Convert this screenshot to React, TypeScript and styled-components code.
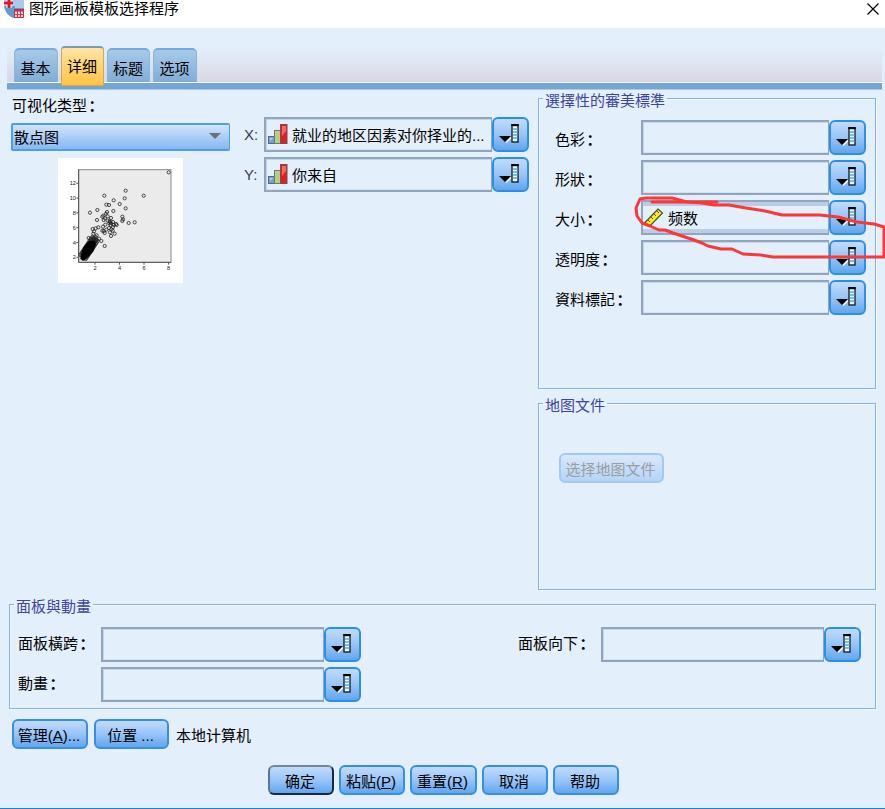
import React from "react";
import styled, { createGlobalStyle, css } from "styled-components";

const GlobalStyle = createGlobalStyle`
  * { box-sizing: border-box; }
  body {
    margin: 0;
    overflow: hidden;
    background: #e3effb;
    color: #000;
    font: 15px/20px "Liberation Sans", "Noto Sans CJK SC", sans-serif;
  }
`;

const Window = styled.div`
  position: relative;
  width: 885px;
  height: 809px;
  display: flex;
  flex-direction: column;
  background: #e3effb;
  border-bottom: 1px solid #1583d8;
  white-space: nowrap;
`;

const TitleBar = styled.header`
  height: 28px;
  flex: none;
  display: flex;
  align-items: flex-start;
  padding: 0 5px 0 4px;
  background: #fff;
`;

const Title = styled.h1`
  flex: 1;
  margin: 0 0 0 4px;
  font: inherit;
  line-height: 17px;
`;

const CloseIcon = styled.svg`
  margin-top: 2px;
`;

const TabStrip = styled.nav`
  height: 54px;
  flex: none;
  margin: 0 3px 0 7px;
  padding-left: 7px;
  display: flex;
  align-items: flex-end;
  background: linear-gradient(#e3effb 35%, #d9d7e4);
`;

const TabRule = styled.div`
  height: 8px;
  flex: none;
  margin: 0 3px 0 7px;
  background: #74a5d3;
  border-top: 1px solid #f5f8fc;
  border-bottom: 1px solid #a9cbea;
`;

const Tab = styled.button<{ $active?: boolean; $width: number }>`
  width: ${(p) => p.$width}px;
  height: 34px;
  margin-right: 3px;
  padding: 6px 1px 0 0;
  border: 1px solid #86b6e0;
  border-top: 2px solid #78a9d8;
  border-bottom: 0;
  border-radius: 5px 5px 0 0;
  background: linear-gradient(#a5cbea, #82acd6);
  color: #000;
  font: inherit;
  line-height: 24px;
  ${(p) =>
    p.$active &&
    css`
      height: 40px;
      margin-bottom: -4px;
      padding: 1px 1px 0 0;
      z-index: 1;
      border: 1px solid #dca83e;
      border-top: 2px solid #7b99b8;
      border-radius: 4px 4px 0 0;
      background: linear-gradient(#ffe4a6, #ffc444);
    `}
`;

const Main = styled.main`
  height: 506px;
  flex: none;
  display: grid;
  grid-template-columns: 232px 306px 338px;
`;

const TypePanel = styled.section`
  padding: 6px 0 0 11px;
`;

const TypeLabel = styled.div`
  height: 27px;
  padding-left: 1px;
`;

const Colon = styled.span`
  margin-left: 1.5px;
  font-weight: 700;
`;

const Select = styled.div`
  width: 219px;
  height: 28px;
  display: flex;
  align-items: center;
  justify-content: space-between;
  padding: 2px 8px 0 1px;
  border: 2px solid #4f9fe8;
  border-right-width: 1px;
  border-radius: 2px;
  background: linear-gradient(#d0e4fb, #86b8f2);
`;

const SelectArrow = styled.svg`
  margin-bottom: 4px;
`;

const Preview = styled.svg`
  display: block;
  margin: 7px 0 0 47px;
  background: #fff;
`;

const AxisPanel = styled.section`
  padding: 27px 0 0 12px;
  display: flex;
  flex-direction: column;
  gap: 5px;
`;

const SideColumn = styled.aside`
  display: flex;
  flex-direction: column;
  gap: 6px;
`;

const Group = styled.fieldset<{ $height: number }>`
  height: ${(p) => p.$height}px;
  min-width: 0;
  margin: 0;
  padding: 0 0 0 4px;
  border: 1px solid #84b3df;
  box-shadow: 1px 1px #f1f8fe, inset 1px 1px #f1f8fe;
`;

const Legend = styled.legend`
  padding: 4px 2px 0;
  height: 17px;
  line-height: 13px;
  color: #3f45a1;
`;

const Rows = styled.div`
  display: flex;
  flex-direction: column;
  gap: 5px;
  padding: 13px 0 0 12px;
`;

const PanelRows = styled.div`
  display: grid;
  grid-template-columns: 500px 1fr;
  row-gap: 5px;
  padding: 14px 0 0 4px;
`;

const Row = styled.div`
  display: flex;
  height: 35px;
`;

const Label = styled.label<{ $width: number; $axis?: boolean; $top?: number }>`
  width: ${(p) => p.$width}px;
  flex: none;
  padding-top: ${(p) => p.$top ?? 9}px;
  color: ${(p) => (p.$axis ? "#3c3c48" : "#000")};
`;

const Field = styled.div<{ $width: number; $shaded?: boolean }>`
  width: ${(p) => p.$width}px;
  height: 35px;
  display: flex;
  align-items: center;
  gap: 4px;
  padding: 0 0 0 2px;
  border: 2px solid #92a5bc;
  border-right-width: 1px;
  box-shadow: inset 1px 1px #c1d7ed, inset 0 -1px #cfe1f3;
  ${(p) => p.$shaded && "padding-left: 1px; box-shadow: inset 0 4px #b9cee5, inset 0 -4px #b9cee5;"}
`;

const FieldText = styled.span`
  padding-top: 3px;
`;

const buttonFace = css`
  border: 2px solid #2c8fe7;
  border-radius: 6px;
  background: linear-gradient(#c0dbfc, #98c5f8 50%, #62a6ee);
  color: #000;
  font: inherit;
`;

const PickerButton = styled.button`
  ${buttonFace}
  width: 37px;
  height: 35px;
  padding: 5px 0 0 5px;
  display: flex;
`;

const Button = styled.button<{ $width: number; $primary?: boolean }>`
  ${buttonFace}
  border-color: #388fe0;
  width: ${(p) => p.$width}px;
  height: 30px;
  padding: 3px 2px 0 0;
  line-height: 24px;
  ${(p) => p.$primary && "border-color: #778798 #172b40 #172b40 #5d7690;"}
  &:disabled {
    border-color: #a0caf3;
    background: linear-gradient(#d9e8fc, #b4d4f6);
    color: #9a9da1;
  }
`;

const MapArea = styled.div`
  padding: 41px 0 0 16px;
`;

const BottomArea = styled.section`
  margin: 0 9px 0 9px;
`;

const LocationBar = styled.div`
  display: flex;
  gap: 6px;
  margin: 10px 0 0 12px;
`;

const LocationText = styled.span`
  padding: 7px 0 0 1px;
`;

const Footer = styled.footer`
  display: flex;
  gap: 5px;
  margin: 16px 0 0 268px;
`;

const Markup = styled.svg`
  position: absolute;
  left: 0;
  top: 0;
  pointer-events: none;
`;

function AppIcon() {
  return (
    <svg width="21" height="19" viewBox="0 0 21 19">
      <path d="M0 0H20V10C18 16 14 19 10 18C5 17 1 12 0 6Z" fill="#5d9cce" />
      <path d="M8 0H20V8H11V6H8Z" fill="#a8cce8" />
      <path d="M0 3H9M5 0V8" stroke="#fff" strokeWidth="5" />
      <path d="M0 3H9M5 0V8" stroke="#d9182d" strokeWidth="3" />
      <path d="M10.500 9.500H19.500V17.500H10.500Z" fill="#f4d2d7" stroke="#c62b42" />
      <path d="M10 10.500H20" stroke="#c62b42" strokeWidth="2" />
      <path d="M10 14.500H20M13.500 11V18M16.500 11V18" stroke="#d7344d" />
    </svg>
  );
}

function PickerIcon() {
  return (
    <svg width="22" height="21" viewBox="0 0 22 21">
      <path d="M0 12H12L6 18Z" fill="#000" />
      <path d="M7 18.500L12 13.500" stroke="#fff" strokeWidth="1.200" />
      <rect x="13" y="1" width="6" height="17" fill="#eaf7ff" stroke="#222" strokeWidth="1.400" />
      <path d="M12.300 1H19.700" stroke="#000" strokeWidth="2.400" />
      <path d="M14 5H18.500M14 8H18.500M14 11H18.500M14 14H18.500" stroke="#4eb0dc" strokeWidth="1.300" />
    </svg>
  );
}

function OrdinalIcon() {
  return (
    <svg width="20" height="21" viewBox="0 0 20 21">
      <rect x=".5" y="12.500" width="6" height="7" fill="#6ea2dc" stroke="#63666d" />
      <rect x="6.500" y="6.500" width="6" height="13" fill="#afd08c" stroke="#74776f" />
      <rect x="12.500" y=".5" width="6.500" height="19" fill="#e51c20" stroke="#77504f" />
      <path d="M14 2H18V7L14 12Z" fill="#fb6667" />
      <path d="M2 14H5L2 17Z" fill="#b5d2f1" />
    </svg>
  );
}

function ScaleIcon() {
  return (
    <svg width="20" height="20" viewBox="0 0 20 20">
      <path d="M1 14.500L14 1L18.500 5L5.500 18.500Z" fill="#f7eb24" stroke="#4e4d31" strokeWidth="1.200" />
      <path d="M4 12L6 14M7 9L9 11M10 6L12 8M13 3L15 5" stroke="#4e4d20" />
    </svg>
  );
}

const points = [
  [385, 82], [256, 137], [192, 152], [310, 152], [253, 160], [220, 166], [198, 179], [206, 180],
  [238, 177], [256, 190], [171, 195], [149, 203], [219, 198], [200, 201], [197, 206], [170, 225],
  [189, 212], [190, 225], [202, 214], [212, 219], [246, 215], [248, 223], [246, 228], [265, 234],
  [283, 232], [209, 231], [218, 231], [227, 237], [211, 240], [202, 227], [218, 246], [195, 239],
  [188, 245], [174, 247], [157, 252], [166, 250], [186, 257], [193, 264], [206, 249], [209, 262],
  [223, 266], [212, 273], [198, 254], [161, 259], [169, 271], [159, 266], [145, 279], [176, 281],
  [183, 288], [193, 303], [169, 284], [151, 282], [160, 280], [213, 253], [220, 240], [194, 220],
  [207, 235], [229, 240], [186, 215], [217, 257], [208, 229], [212, 234], [166, 276], [190, 258],
];

// Dense lower-left cloud, spread along the rising diagonal
const cloud = Array.from({ length: 70 }, (_, i) => {
  const t = (i % 14) / 13;
  const spread = (Math.floor(i / 14) - 2) * 4;
  return [128 + t * 36 + spread, 336 - t * 54 + spread * 0.8];
});

function ScatterPreview() {
  return (
    <Preview width="125" height="125" viewBox="53 39 375 375">
      <rect x="115" y="74" width="277" height="278" fill="#ebebeb" stroke="#8a8a8a" strokeWidth="3" />
      <path d="M115 73V352H392" fill="none" stroke="#555" strokeWidth="3" />
      <g fill="#222" fontFamily="Liberation Sans" fontSize="17" textAnchor="end">
        {[12, 10, 8, 6, 4, 2].map((n, i) => (
          <React.Fragment key={n}>
            <path d={`M108 ${115 + i * 44.400}H115`} stroke="#555" strokeWidth="3" />
            <text x="107" y={121 + i * 44.400}>{n}</text>
          </React.Fragment>
        ))}
      </g>
      <g fill="#222" fontFamily="Liberation Sans" fontSize="17" textAnchor="middle">
        {[2, 4, 6, 8].map((n, i) => (
          <React.Fragment key={n}>
            <path d={`M${164 + i * 73.500} 352V359`} stroke="#555" strokeWidth="3" />
            <text x={164 + i * 73.500} y="376">{n}</text>
          </React.Fragment>
        ))}
      </g>
      <g fill="none" stroke="#222" strokeWidth="2.400">
        {points.map(([x, y], i) => <circle key={i} cx={x} cy={y} r="4.800" />)}
        {cloud.map(([x, y], i) => <circle key={i} cx={x} cy={y} r="4.800" />)}
      </g>
      <path d="M120 342L123 324L129 307L145 288L163 287L167 298L159 319L144 336L128 348Z" fill="#000" />
    </Preview>
  );
}

type VariableProps = {
  label: string;
  labelWidth: number;
  labelTop?: number;
  fieldWidth: number;
  axis?: boolean;
  shaded?: boolean;
  icon?: React.ReactNode;
  value?: string;
};

function VariableRow({ label, labelWidth, labelTop, fieldWidth, axis, shaded, icon, value }: VariableProps) {
  return (
    <Row>
      <Label $width={labelWidth} $axis={axis} $top={labelTop}>
        {label}
        {!axis && <Colon>：</Colon>}
      </Label>
      <Field $width={fieldWidth} $shaded={shaded}>
        {icon}
        {value && <FieldText>{value}</FieldText>}
      </Field>
      <PickerButton><PickerIcon /></PickerButton>
    </Row>
  );
}

export default function App() {
  return (
    <>
      <GlobalStyle />
      <Window>
        <TitleBar>
          <AppIcon />
          <Title>图形画板模板选择程序</Title>
          <CloseIcon width="14" height="14" viewBox="0 0 14 14">
            <path d="M1.500 1.500L12.500 12.500M12.500 1.500L1.500 12.500" stroke="#000" strokeWidth="1.200" />
          </CloseIcon>
        </TitleBar>
        <TabStrip>
          <Tab $width={44}>基本</Tab>
          <Tab $width={43} $active>详细</Tab>
          <Tab $width={43}>标题</Tab>
          <Tab $width={44}>选项</Tab>
        </TabStrip>
        <TabRule />
        <Main>
          <TypePanel>
            <TypeLabel>可视化类型<Colon>：</Colon></TypeLabel>
            <Select>
              散点图
              <SelectArrow width="12" height="7" viewBox="0 0 12 7"><path d="M0 0H12L6 6Z" fill="#68717d" /></SelectArrow>
            </Select>
            <ScatterPreview />
          </TypePanel>
          <AxisPanel>
            <VariableRow label="X:" labelWidth={20} labelTop={8} fieldWidth={228} axis icon={<OrdinalIcon />} value="就业的地区因素对你择业的..." />
            <VariableRow label="Y:" labelWidth={20} labelTop={8} fieldWidth={228} axis icon={<OrdinalIcon />} value="你来自" />
          </AxisPanel>
          <SideColumn>
            <Group $height={299}>
              <Legend>選擇性的審美標準</Legend>
              <Rows>
                <VariableRow label="色彩" labelWidth={86} labelTop={10} fieldWidth={188} />
                <VariableRow label="形狀" labelWidth={86} labelTop={10} fieldWidth={188} />
                <VariableRow label="大小" labelWidth={86} labelTop={10} fieldWidth={188} shaded icon={<ScaleIcon />} value="频数" />
                <VariableRow label="透明度" labelWidth={86} labelTop={10} fieldWidth={188} />
                <VariableRow label="資料標記" labelWidth={86} labelTop={10} fieldWidth={188} />
              </Rows>
            </Group>
            <Group $height={195}>
              <Legend>地图文件</Legend>
              <MapArea><Button $width={105} disabled>选择地图文件</Button></MapArea>
            </Group>
          </SideColumn>
        </Main>
        <BottomArea>
          <Group $height={113}>
            <Legend>面板與動畫</Legend>
            <PanelRows>
              <VariableRow label="面板橫跨" labelWidth={83} labelTop={7} fieldWidth={223} />
              <VariableRow label="面板向下" labelWidth={83} labelTop={7} fieldWidth={223} />
              <VariableRow label="動畫" labelWidth={83} labelTop={7} fieldWidth={223} />
            </PanelRows>
          </Group>
        </BottomArea>
        <LocationBar>
          <Button $width={76}>管理(<u>A</u>)...</Button>
          <Button $width={75}>位置 ...</Button>
          <LocationText>本地计算机</LocationText>
        </LocationBar>
        <Footer>
          <Button $width={66} $primary>确定</Button>
          <Button $width={66}>粘贴(<u>P</u>)</Button>
          <Button $width={67}>重置(<u>R</u>)</Button>
          <Button $width={66}>取消</Button>
          <Button $width={66}>帮助</Button>
        </Footer>
        <Markup width="885" height="270" viewBox="0 0 885 270" fill="none" stroke="#fb3737" strokeWidth="3" strokeLinejoin="round" strokeLinecap="round">
          <path d="M652 202H717" />
          <path d="M884 257H773L761 255L743 254L732 249L721 249L708 246L702 243L694 240L682 236L673 233L665 230L659 230L650 226L642 223L637 216L636 208L640 199L646 198L672 198L687 202L702 203L714 205L729 205L746 208L765 211L782 215L820 215L838 217L857 222L874 224L884 227V257" />
        </Markup>
      </Window>
    </>
  );
}
